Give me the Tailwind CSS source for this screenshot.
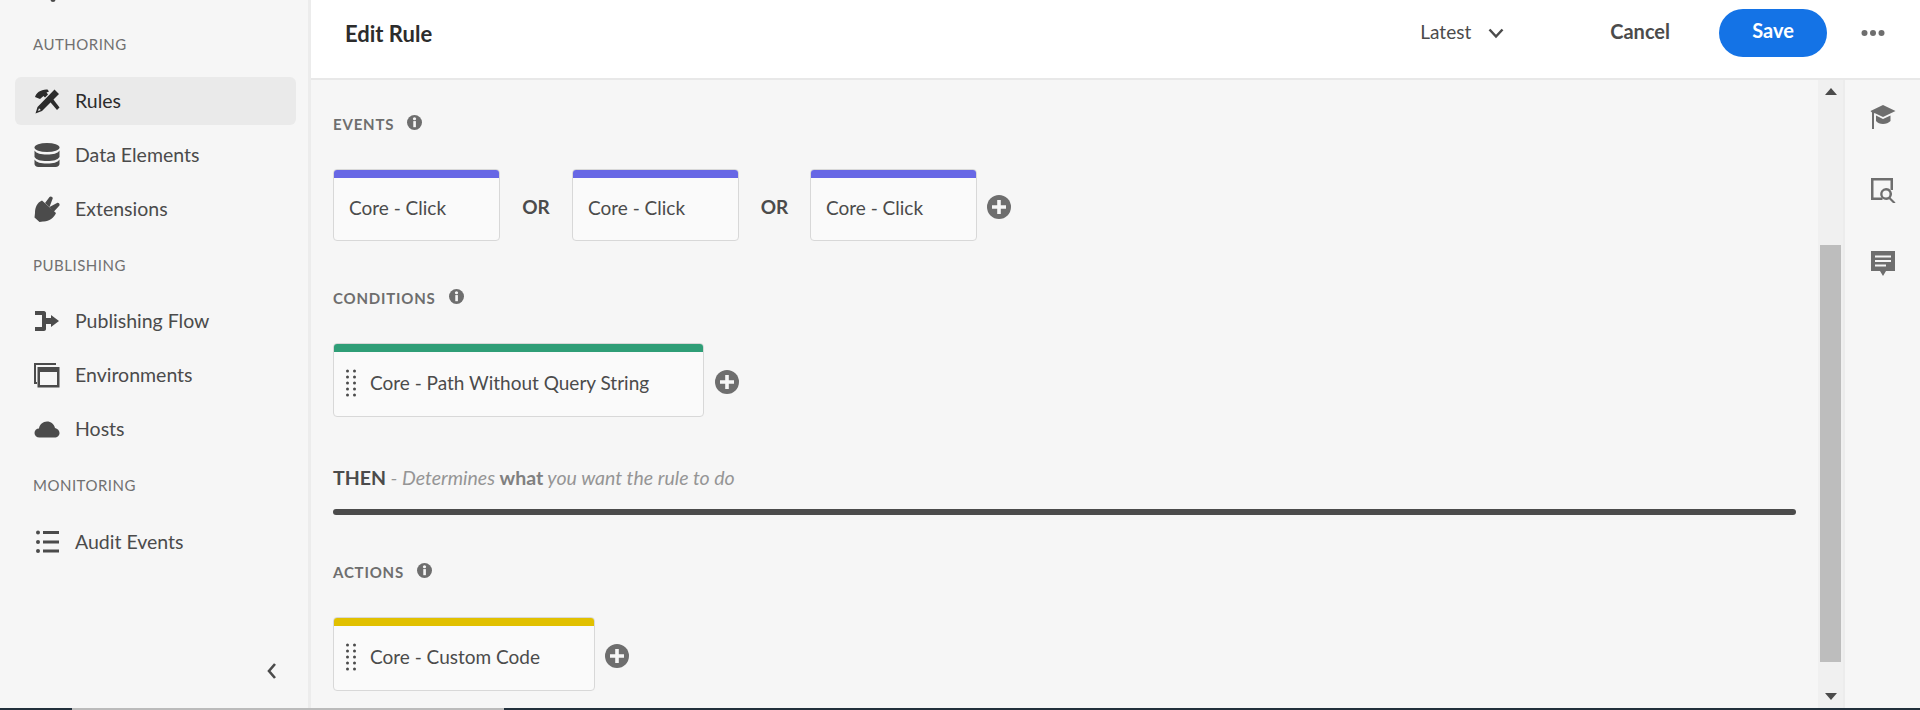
<!DOCTYPE html>
<html lang="en">

<head>
    <meta charset="UTF-8">
    <title>Edit Rule</title>
    <script src="https://cdn.jsdelivr.net/npm/@tailwindcss/browser@4"></script>
</head>

<body class="bg-[#f6f6f6] overflow-hidden font-['Lato',sans-serif]">
    <div class="flex h-[708px] w-[1920px] overflow-hidden text-[#4b4b4b]">

        <!-- left nav -->
        <aside class="relative w-[311px] shrink-0 border-r-[3px] border-[#ececec] bg-[#f6f6f6] text-[19.5px]">
            <svg class="absolute left-[48px] top-[-2px] h-[4px] w-[10px] text-[#4b4b4b]" viewBox="0 0 10 4" fill="currentColor"><circle cx="5" cy="1.5" r="2.5"/></svg>
            <div class="pl-[33px] pt-[34px] text-[15px] leading-[20px] tracking-[0.5px] text-[#707070]">AUTHORING</div>
            <div class="mt-[23px] flex flex-col gap-[10px] pl-[15px] pr-[12px]">
                <a class="-mb-[2px] flex h-[48px] items-center gap-[16px] rounded-[6px] bg-[#eaeaea] pl-[19px] text-[#2c2c2c]">
                    <svg class="h-[26px] w-[26px]" viewBox="0 0 26 26" fill="currentColor"><path d="M1 9C2 5 7 1 13.500 1.500L15 3.500 12.500 4.500 14 6.500 11 9.500 9.500 8 6 11z"/><path d="M14.500 12 17.500 9 25.500 19.500 23 22z"/><path fill-rule="evenodd" d="M20.500 1.500 25 6 8 23 1.500 25.500 3.500 19zM5 20.200 4 23l2.800-1z"/></svg>
                    <span class="-ml-px -mt-[1px]">Rules</span>
                </a>
                <a class="flex h-[44px] items-center gap-[16px] pl-[19px]">
                    <svg class="h-[26px] w-[26px]" viewBox="0 0 26 26" fill="currentColor"><ellipse cx="13" cy="5.500" rx="12.500" ry="4.500"/><path d="M.5 8.500c2 3 6 4 12.500 4s10.500-1 12.500-4V15c-2 3-6 4-12.500 4S2.500 18 .5 15z"/><path d="M.5 17.500c2 3 6 4 12.500 4s10.500-1 12.500-4V22c0 1.500-1.500 3-4 3H4.500c-2.500 0-4-1.500-4-3z"/></svg>
                    <span class="-ml-px -mt-[1px]">Data Elements</span>
                </a>
                <a class="flex h-[44px] items-center gap-[16px] pl-[19px]">
                    <svg class="h-[26px] w-[26px]" viewBox="0 0 26 26" fill="currentColor"><path d="M8 4.500 22 17C20 22 14.500 26 9 25.500L5.500 26 .5 21.500 1 17C1 11.500 3 6.500 8 4.500z"/><path d="M11 7 15.500 1c1.200-1.500 4 .2 3 2L15.500 11zM15.500 11 23 7c1.700-.8 3.600 1.600 2 3L19.500 16z"/></svg>
                    <span class="-ml-px -mt-[1px]">Extensions</span>
                </a>
            </div>

            <div class="mt-[24px] pl-[33px] text-[15px] leading-[20px] tracking-[0.5px] text-[#707070]">PUBLISHING</div>
            <div class="mt-[24px] flex flex-col gap-[10px] pl-[15px] pr-[12px]">
                <a class="flex h-[44px] items-center gap-[16px] pl-[19px]">
                    <svg class="h-[26px] w-[26px]" viewBox="0 0 26 26" fill="currentColor"><path d="M1 3h9c1 0 2 1 2 2v5h5V7l8 6-8 6v-3h-5v5c0 1-1 2-2 2H1v-4h7V7H1z"/></svg>
                    <span class="-ml-px -mt-[1px]">Publishing Flow</span>
                </a>
                <a class="flex h-[44px] items-center gap-[16px] pl-[19px]">
                    <svg class="h-[26px] w-[26px]" viewBox="0 0 26 26" fill="currentColor"><path d="M0 1h22v2H2v17h1v2H0z"/><path fill-rule="evenodd" d="M3.500 5H25.500V25.500H3.500zM6 10v13h17V10z"/></svg>
                    <span class="-ml-px -mt-[1px]">Environments</span>
                </a>
                <a class="flex h-[44px] items-center gap-[16px] pl-[19px]">
                    <svg class="h-[26px] w-[26px]" viewBox="0 0 26 26" fill="currentColor"><path d="M5.500 21.500C2.500 21.500.5 19.500.5 17s2-4.500 4.500-4.500c.5-4 4-7 8-7s7 2.500 8 6.500c2.500.5 4.500 2.500 4.500 5s-2 4.500-5 4.500z"/></svg>
                    <span class="-ml-px -mt-[1px]">Hosts</span>
                </a>
            </div>

            <div class="mt-[24px] pl-[33px] text-[15px] leading-[20px] tracking-[0.5px] text-[#707070]">MONITORING</div>
            <div class="mt-[25px] flex flex-col pl-[15px] pr-[12px]">
                <a class="flex h-[44px] items-center gap-[16px] pl-[19px]">
                    <svg class="h-[26px] w-[26px]" viewBox="0 0 26 26" fill="currentColor"><circle cx="4" cy="3.500" r="2"/><circle cx="4" cy="13" r="2"/><circle cx="4" cy="22" r="2"/><rect x="9" y="2" width="16" height="3"/><rect x="9" y="11.500" width="16" height="3"/><rect x="9" y="20.500" width="16" height="3"/></svg>
                    <span class="-ml-px -mt-[1px]">Audit Events</span>
                </a>
            </div>

            <svg class="absolute left-[264px] top-[662px] h-[18px] w-[16px] text-[#4b4b4b]" viewBox="0 0 16 18" fill="none" stroke="currentColor" stroke-width="2.600"><path d="M11 2 5 9l6 7"/></svg>
        </aside>

        <!-- main -->
        <div class="flex min-w-0 flex-1 flex-col">
            <header class="flex h-[80px] shrink-0 items-center border-b-2 border-[#e8e8e8] bg-white pb-[12px]">
                <h1 class="pl-[34px] text-[22px] font-bold text-[#2c2c2c]">Edit Rule</h1>
                <div class="ml-auto flex items-center text-[20px]">
                    <span class="-mt-[2px] text-[19px]">Latest</span>
                    <svg class="ml-[17px] h-[12px] w-[16px]" viewBox="0 0 16 12" fill="none" stroke="currentColor" stroke-width="2.500"><path d="m1.500 2.500 6.500 7 6.500-7"/></svg>
                    <span class="ml-[106px] -mt-[5px] font-bold">Cancel</span>
                    <button class="ml-[49px] h-[48px] w-[108px] rounded-full bg-[#1473e6] pb-[6px] text-[20px] font-bold text-white">Save</button>
                    <svg class="ml-[34px] mr-[35px] h-[8px] w-[24px] text-[#6e6e6e]" viewBox="0 0 24 8" fill="currentColor"><circle cx="3.500" cy="4" r="3"/><circle cx="12" cy="4" r="3"/><circle cx="20.500" cy="4" r="3"/></svg>
                </div>
            </header>

            <div class="flex min-h-0 flex-1">
                <main class="min-w-0 flex-1 px-[22px]">
                    <!-- events -->
                    <div class="mt-[34px] flex h-[20px] items-center text-[15px] font-bold tracking-[0.8px] text-[#6e6e6e]">
                        <span>EVENTS</span>
                        <svg class="ml-[13px] h-[15px] w-[15px] -mt-[3px]" viewBox="0 0 16 16"><circle cx="8" cy="8" r="8" fill="currentColor"/><rect x="6.700" y="6.500" width="2.800" height="6.500" fill="#f6f6f6"/><circle cx="8" cy="4" r="1.700" fill="#f6f6f6"/></svg>
                    </div>
                    <div class="mt-[35px] flex items-center">
                        <div class="flex h-[72px] w-[167px] flex-col overflow-hidden rounded-[4px] border border-[#d8d8d8] bg-[#fafafa]">
                            <div class="-mx-px -mt-px h-[9px] shrink-0 bg-[#6767e5]"></div>
                            <div class="flex flex-1 items-center pb-[2px] pl-[15px] text-[19px]">Core - Click</div>
                        </div>
                        <span class="mt-[4px] w-[72px] text-center text-[19px] font-bold">OR</span>
                        <div class="flex h-[72px] w-[167px] flex-col overflow-hidden rounded-[4px] border border-[#d8d8d8] bg-[#fafafa]">
                            <div class="-mx-px -mt-px h-[9px] shrink-0 bg-[#6767e5]"></div>
                            <div class="flex flex-1 items-center pb-[2px] pl-[15px] text-[19px]">Core - Click</div>
                        </div>
                        <span class="mt-[4px] w-[71px] text-center text-[19px] font-bold">OR</span>
                        <div class="flex h-[72px] w-[167px] flex-col overflow-hidden rounded-[4px] border border-[#d8d8d8] bg-[#fafafa]">
                            <div class="-mx-px -mt-px h-[9px] shrink-0 bg-[#6767e5]"></div>
                            <div class="flex flex-1 items-center pb-[2px] pl-[15px] text-[19px]">Core - Click</div>
                        </div>
                        <svg class="ml-[10px] mt-[4px] h-[24px] w-[24px] text-[#6e6e6e]" viewBox="0 0 24 24"><circle cx="12" cy="12" r="12" fill="currentColor"/><path d="M10.200 5h3.600v5.200H19v3.600h-5.200V19h-3.600v-5.200H5v-3.600h5.200z" fill="#f6f6f6"/></svg>
                    </div>

                    <!-- conditions -->
                    <div class="mt-[47px] flex h-[20px] items-center text-[15px] font-bold tracking-[0.8px] text-[#6e6e6e]">
                        <span>CONDITIONS</span>
                        <svg class="ml-[13px] h-[15px] w-[15px] -mt-[3px]" viewBox="0 0 16 16"><circle cx="8" cy="8" r="8" fill="currentColor"/><rect x="6.700" y="6.500" width="2.800" height="6.500" fill="#f6f6f6"/><circle cx="8" cy="4" r="1.700" fill="#f6f6f6"/></svg>
                    </div>
                    <div class="mt-[35px] flex items-center">
                        <div class="flex h-[74px] w-[371px] flex-col overflow-hidden rounded-[4px] border border-[#d8d8d8] bg-[#fafafa]">
                            <div class="-mx-px -mt-px h-[9px] shrink-0 bg-[#2f9e77]"></div>
                            <div class="flex flex-1 items-center pb-[2px] pl-[12px] text-[19px]">
                                <svg class="mr-[14px] h-[28px] w-[10px] text-[#4b4b4b]" viewBox="0 0 10 28" fill="currentColor"><circle cx="1.500" cy="2" r="1.500"/><circle cx="8.500" cy="2" r="1.500"/><circle cx="1.500" cy="8" r="1.500"/><circle cx="8.500" cy="8" r="1.500"/><circle cx="1.500" cy="14" r="1.500"/><circle cx="8.500" cy="14" r="1.500"/><circle cx="1.500" cy="20" r="1.500"/><circle cx="8.500" cy="20" r="1.500"/><circle cx="1.500" cy="26" r="1.500"/><circle cx="8.500" cy="26" r="1.500"/></svg>
                                <span>Core - Path Without Query String</span>
                            </div>
                        </div>
                        <svg class="ml-[11px] mt-[4px] h-[24px] w-[24px] text-[#6e6e6e]" viewBox="0 0 24 24"><circle cx="12" cy="12" r="12" fill="currentColor"/><path d="M10.200 5h3.600v5.200H19v3.600h-5.200V19h-3.600v-5.200H5v-3.600h5.200z" fill="#f6f6f6"/></svg>
                    </div>

                    <!-- then -->
                    <div class="mt-[49px] text-[19.5px] leading-[24px] italic text-[#959595]">
                        <span class="font-bold not-italic text-[#4b4b4b]">THEN</span> - Determines <span class="font-bold not-italic text-[#808080]">what</span> you want the rule to do
                    </div>
                    <div class="mt-[19px] h-[6px] rounded-full bg-[#4b4b4b]"></div>

                    <!-- actions -->
                    <div class="mt-[47px] flex h-[20px] items-center text-[15px] font-bold tracking-[0.8px] text-[#6e6e6e]">
                        <span>ACTIONS</span>
                        <svg class="ml-[13px] h-[15px] w-[15px] -mt-[3px]" viewBox="0 0 16 16"><circle cx="8" cy="8" r="8" fill="currentColor"/><rect x="6.700" y="6.500" width="2.800" height="6.500" fill="#f6f6f6"/><circle cx="8" cy="4" r="1.700" fill="#f6f6f6"/></svg>
                    </div>
                    <div class="mt-[35px] flex items-center">
                        <div class="flex h-[74px] w-[262px] flex-col overflow-hidden rounded-[4px] border border-[#d8d8d8] bg-[#fafafa]">
                            <div class="-mx-px -mt-px h-[9px] shrink-0 bg-[#e1c000]"></div>
                            <div class="flex flex-1 items-center pb-[2px] pl-[12px] text-[19px]">
                                <svg class="mr-[14px] h-[28px] w-[10px] text-[#4b4b4b]" viewBox="0 0 10 28" fill="currentColor"><circle cx="1.500" cy="2" r="1.500"/><circle cx="8.500" cy="2" r="1.500"/><circle cx="1.500" cy="8" r="1.500"/><circle cx="8.500" cy="8" r="1.500"/><circle cx="1.500" cy="14" r="1.500"/><circle cx="8.500" cy="14" r="1.500"/><circle cx="1.500" cy="20" r="1.500"/><circle cx="8.500" cy="20" r="1.500"/><circle cx="1.500" cy="26" r="1.500"/><circle cx="8.500" cy="26" r="1.500"/></svg>
                                <span>Core - Custom Code</span>
                            </div>
                        </div>
                        <svg class="ml-[10px] mt-[4px] h-[24px] w-[24px] text-[#6e6e6e]" viewBox="0 0 24 24"><circle cx="12" cy="12" r="12" fill="currentColor"/><path d="M10.200 5h3.600v5.200H19v3.600h-5.200V19h-3.600v-5.200H5v-3.600h5.200z" fill="#f6f6f6"/></svg>
                    </div>
                </main>

                <!-- scrollbar -->
                <div class="relative flex w-[25px] shrink-0 flex-col items-center bg-[#f0f0f0]">
                    <svg class="mt-[8px] h-[7px] w-[12px]" viewBox="0 0 12 7" fill="#4b4b4b"><path d="M6 0l6 7H0z"/></svg>
                    <div class="mt-[150px] h-[417px] w-[21px] bg-[#bdbdbd]"></div>
                    <svg class="mt-[31px] h-[7px] w-[12px]" viewBox="0 0 12 7" fill="#4b4b4b"><path d="M6 7l6-7H0z"/></svg>
                </div>

                <!-- right rail -->
                <div class="flex w-[77px] shrink-0 flex-col items-center border-l-2 border-[#ececec] pt-[24px] text-[#6e6e6e]">
                    <svg class="h-[26px] w-[26px]" viewBox="0 0 26 26" fill="currentColor"><path d="M13 1 25.500 7 13 13 4.500 9 4 9.500V25H2V8.500L.5 7z"/><path d="M6 11.500 13 15l7.500-3.500V17c-2 2-4.500 3-7.500 3s-5.500-1-7-3z"/></svg>
                    <svg class="mt-[47px] h-[26px] w-[26px]" viewBox="0 0 26 26" fill="currentColor"><path d="M1 1h22v12h-2.500V3.500h-17v17h9V23H1z"/><path fill-rule="evenodd" d="M16 11a6 6 0 0 1 4.700 9.700l4.800 4.800-1.500 1.500-4.800-4.800A6 6 0 1 1 16 11zm0 2.500a3.500 3.500 0 1 0 0 7 3.500 3.500 0 0 0 0-7z"/></svg>
                    <svg class="mt-[47px] h-[26px] w-[26px]" viewBox="0 0 26 26" fill="currentColor"><path fill-rule="evenodd" d="M1 1h24v20h-9l-3 5-3-5H1zM5 5.500v2h16v-2zM5 10v2h16v-2zM5 14.500v2h11v-2z"/></svg>
                </div>
            </div>
        </div>
    </div>
    <div class="flex h-[2px] w-full bg-[#22303c]">
        <div class="ml-[72px] w-[432px] bg-[#bbbbbb]"></div>
    </div>
</body>

</html>
